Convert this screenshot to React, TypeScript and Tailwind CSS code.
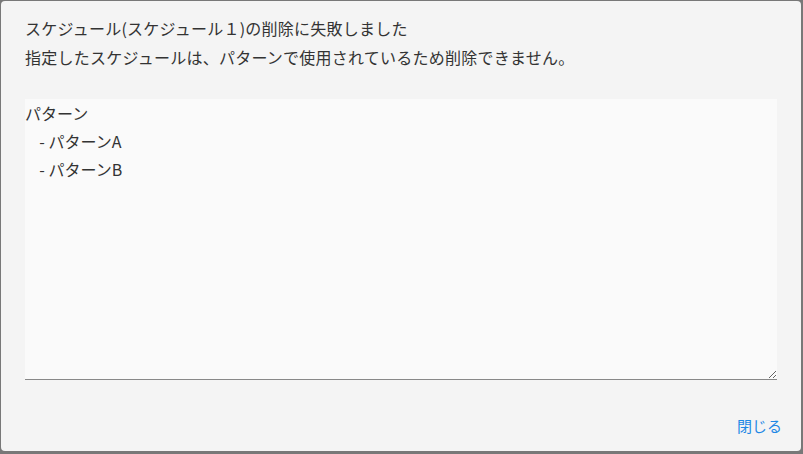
import { useState } from "react";

const font = { fontFamily: '"Noto Sans CJK JP", "Noto Sans", sans-serif' };

export default function App() {
  const [value] = useState("パターン\n    - パターンA\n    - パターンB");

  return (
    <div className="w-[803px] h-[454px] bg-[#787878] pt-px pl-px" style={font}>
      {/* ダイアログ本体 */}
      <div className="w-[800px] h-[450px] bg-[#f4f4f4] rounded-[4px] flex flex-col px-6 pt-[13px]">
        <div className="text-[16px] leading-[29px] tracking-[0.25px] text-[#333]">
          <p>スケジュール(スケジュール１)の削除に失敗しました</p>
          <p>指定したスケジュールは、パターンで使用されているため削除できません。</p>
        </div>

        <textarea
          readOnly
          value={value}
          className="mt-[27px] h-[281px] w-full bg-[#fafafa] border-0 border-b border-[#888] outline-none p-0 text-[16px] leading-[28px] text-[#333]"
          style={font}
        />

        <div className="flex justify-end mt-[35px] -mr-[5px]">
          <button className="text-[15px] leading-[22px] text-[#1e88e5] px-0">閉じる</button>
        </div>
      </div>
    </div>
  );
}
